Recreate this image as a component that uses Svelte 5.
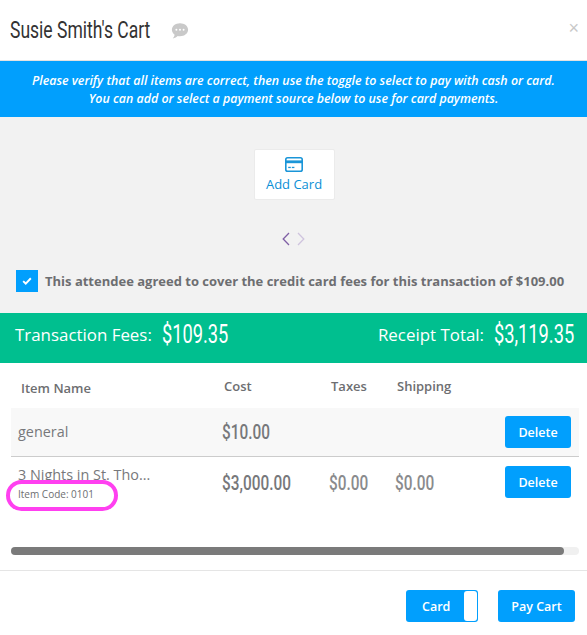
<script lang="ts">
  interface Item {
    name: string;
    code?: string;
    cost: string;
    taxes?: string;
    shipping?: string;
  }

  const items: Item[] = [
    { name: 'general', cost: '$10.00' },
    { name: '3 Nights in St. Tho...', code: 'Item Code: 0101', cost: '$3,000.00', taxes: '$0.00', shipping: '$0.00' }
  ];
</script>

<div class="modal">
  <header class="head">
    <h1><span class="narrow">Susie Smith's Cart</span></h1>
    <svg class="chat" viewBox="0 0 20 20" width="20" height="18" aria-hidden="true">
      <path d="M10 1.500c5 0 9 3.100 9 7.200s-4 7.200-9 7.200c-.9 0-1.700-.1-2.500-.3-1.300 1.300-3 2.400-5.500 2.700 1-1 1.800-2.400 2-4C2.300 13 1 11 1 8.700 1 4.600 5 1.500 10 1.500z" fill="#c9c9c9" />
      <circle cx="6" cy="8.700" r="1.100" fill="#fff" />
      <circle cx="10" cy="8.700" r="1.100" fill="#fff" />
      <circle cx="14" cy="8.700" r="1.100" fill="#fff" />
    </svg>
    <span class="close">×</span>
  </header>

  <div class="notice">
    <p>Please verify that all items are correct, then use the toggle to select to pay with cash or card.</p>
    <p>You can add or select a payment source below to use for card payments.</p>
  </div>

  <section class="payment">
    <button class="add-card">
      <svg viewBox="0 0 18 15" width="18" height="15" aria-hidden="true">
        <rect x="0.8" y="0.8" width="16.400" height="13.400" rx="1.800" fill="none" stroke="#1a95d8" stroke-width="1.600" />
        <rect x="1" y="3.400" width="16" height="2.800" fill="#1a95d8" />
        <rect x="3.200" y="9.800" width="2.600" height="1.300" fill="#1a95d8" />
        <rect x="6.800" y="9.800" width="2.600" height="1.300" fill="#1a95d8" />
      </svg>
      <span>Add Card</span>
    </button>

    <div class="pager">
      <svg viewBox="0 0 8 14" width="8" height="14" aria-hidden="true"><path d="M7 1 1.200 7 7 13" fill="none" stroke="#7f5fa5" stroke-width="1.300" /></svg>
      <svg viewBox="0 0 8 14" width="8" height="14" aria-hidden="true"><path d="M1 1l5.800 6L1 13" fill="none" stroke="#cfc4de" stroke-width="1.300" /></svg>
    </div>

    <label class="agree">
      <span class="check">
        <svg viewBox="0 0 12 10" width="10" height="8" aria-hidden="true"><path d="M1.200 5.200 4.400 8.200 10.800 1.600" fill="none" stroke="#fff" stroke-width="2.400" /></svg>
      </span>
      <span>This attendee agreed to cover the credit card fees for this transaction of $109.00</span>
    </label>
  </section>

  <div class="totals">
    <div class="total"><span>Transaction Fees:</span><strong class="fees"><span class="narrow">$109.35</span></strong></div>
    <div class="total"><span>Receipt Total:</span><strong class="receipt"><span class="narrow">$3,119.35</span></strong></div>
  </div>

  <div class="table">
    <div class="row labels">
      <span class="name-label">Item Name</span>
      <span>Cost</span>
      <span>Taxes</span>
      <span>Shipping</span>
    </div>

    {#each items as item}
      <div class="row item" class:shaded={!item.code}>
        <div class="name">
          <div>{item.name}</div>
          {#if item.code}
            <div class="code">{item.code}</div>
          {/if}
        </div>
        <span class="money"><span class="narrow">{item.cost}</span></span>
        <span class="money light"><span class="narrow">{item.taxes ?? ''}</span></span>
        <span class="money light"><span class="narrow">{item.shipping ?? ''}</span></span>
        <button class="btn delete">Delete</button>
      </div>
    {/each}

    <div class="oval"></div>

    <div class="track"><div class="thumb"></div></div>
  </div>

  <footer class="foot">
    <div class="btn toggle">
      <span>Card</span>
      <i></i>
    </div>
    <button class="btn pay">Pay Cart</button>
  </footer>
</div>

<style>
  :global(body) {
    margin: 0;
    background: #fff;
  }
  .modal {
    width: 587px;
    height: 635px;
    overflow: hidden;
    font-family: "Open Sans", "Liberation Sans", sans-serif;
    color: #6d6e71;
  }
  /* no condensed face installed, so squeeze Roboto */
  .narrow {
    display: inline-block;
    white-space: nowrap;
    transform: scaleX(0.73);
    transform-origin: left center;
  }
  .money .narrow {
    transform: scaleX(0.77);
  }
  .head {
    height: 60px;
    display: flex;
    align-items: center;
    padding: 0 10px;
    border-bottom: 1px solid #e2e2e2;
  }
  h1 {
    margin: 0;
    font-family: Roboto, sans-serif;
    font-weight: 400;
    font-size: 24px;
    color: #333;
    width: 141px;
    white-space: nowrap;
  }
  .chat {
    margin-left: 19px;
    margin-top: 2px;
  }
  .close {
    margin-left: auto;
    margin-right: -2px;
    margin-top: -4px;
    color: #c8c8c8;
    font-size: 18px;
    font-family: "Liberation Sans", sans-serif;
  }
  .notice {
    height: 56px;
    box-sizing: border-box;
    background: #019ffd;
    color: #fff;
    font-style: italic;
    font-weight: 600;
    font-size: 12.400px;
    line-height: 18px;
    text-align: center;
    padding-top: 11px;
  }
  .notice p {
    margin: 0;
  }
  .payment {
    height: 196px;
    box-sizing: border-box;
    background: #f2f2f2;
    padding-top: 32px;
    display: flex;
    flex-direction: column;
    align-items: center;
  }
  .add-card {
    width: 81px;
    height: 51px;
    margin-left: 1px;
    box-sizing: border-box;
    background: #fff;
    border: 1px solid #ebebeb;
    border-radius: 2px;
    padding: 7px 0 0;
    display: flex;
    flex-direction: column;
    align-items: center;
    gap: 3px;
    color: #0b8fd6;
    font-family: inherit;
    font-size: 13px;
  }
  .pager {
    display: flex;
    gap: 7px;
    margin-top: 32px;
  }
  .agree {
    align-self: flex-start;
    display: flex;
    align-items: center;
    gap: 7px;
    margin: 24px 0 0 16px;
    font-weight: 700;
    font-size: 13px;
    white-space: nowrap;
  }
  .check {
    width: 22px;
    height: 22px;
    background: #019ffd;
    display: flex;
    align-items: center;
    justify-content: center;
  }
  .totals {
    height: 50px;
    box-sizing: border-box;
    background: #00bf8f;
    color: #fff;
    display: flex;
    align-items: center;
    justify-content: space-between;
    padding: 0 13px 7px 15px;
    font-size: 16.900px;
  }
  .total {
    display: flex;
    align-items: center;
    gap: 10px;
  }
  .total strong {
    font-family: Roboto, sans-serif;
    font-weight: 400;
    font-size: 25px;
  }
  .fees {
    width: 67px;
  }
  .receipt {
    width: 80px;
  }
  .table {
    position: relative;
    margin: 0 8px 0 11px;
    height: 207px;
  }
  .row {
    display: grid;
    grid-template-columns: 204px 107px 66px 110px 66px;
    padding-left: 7px;
    align-items: center;
  }
  .labels {
    height: 45px;
    font-size: 13px;
    font-weight: 600;
    align-items: start;
    padding-top: 14px;
    box-sizing: border-box;
  }
  .labels span:not(.name-label) {
    padding-left: 2px;
  }
  .name-label {
    margin: 2px 0 0 3px;
  }
  .item {
    height: 48px;
  }
  .item.shaded {
    background: #f8f8f8;
    border-bottom: 1px solid #cccccc;
  }
  .item.shaded .name {
    margin-top: -2px;
  }
  .item:not(.shaded) {
    height: 73px;
    align-items: start;
    padding-top: 8px;
    box-sizing: border-box;
  }
  .name {
    font-size: 14.400px;
    color: #77787b;
    white-space: nowrap;
  }
  .code {
    font-size: 10px;
    color: #6d6e71;
    margin-top: 3px;
  }
  .money {
    font-family: Roboto, sans-serif;
    font-size: 20px;
    font-weight: 500;
    color: #77787b;
  }
  .money.light {
    color: #8a8b8d;
  }
  .item:not(.shaded) .money {
    margin-top: 6px;
  }
  .btn {
    background: #019ffd;
    color: #fff;
    border: none;
    border-radius: 3px;
    font-family: inherit;
    font-size: 12.500px;
    font-weight: 600;
    padding: 0;
  }
  .delete {
    width: 66px;
    height: 32px;
  }
  .item:not(.shaded) .delete {
    margin-top: 1px;
  }
  .oval {
    position: absolute;
    left: -5px;
    top: 117px;
    width: 104px;
    height: 23px;
    border: 4px solid #ff40f0;
    border-radius: 16px;
  }
  .track {
    position: absolute;
    left: 0;
    right: 0;
    top: 184px;
    height: 8px;
    background: #f0f0f0;
    border-radius: 4px;
  }
  .thumb {
    width: 553px;
    height: 8px;
    border-radius: 4px;
    background: #7a7a7a;
  }
  .foot {
    border-top: 1px solid #e5e5e5;
    display: flex;
    justify-content: flex-end;
    gap: 20px;
    padding: 19px 12px 0 0;
  }
  .toggle {
    width: 72px;
    height: 32px;
    box-sizing: border-box;
    display: flex;
    align-items: center;
    justify-content: space-between;
    padding: 1px 1px 1px 16px;
  }
  .toggle i {
    width: 13px;
    height: 30px;
    background: #fff;
    border-radius: 3px;
  }
  .pay {
    width: 77px;
    height: 32px;
  }
</style>
